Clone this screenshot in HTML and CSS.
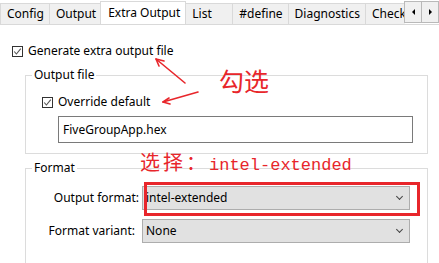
FILE: index.html
```html
<!DOCTYPE html>
<html>
<head>
    <title>Extra Output</title>
    <link rel="stylesheet" href="styles.css">
</head>
<body>
<!-- Tab strip -->
<div class="tabs">
    <div class="tab-list">
        <div class="tab">Config</div>
        <div class="tab">Output</div>
        <div class="tab active">Extra Output</div>
        <div class="tab">List</div>
        <div class="tab">#define</div>
        <div class="tab">Diagnostics</div>
        <div class="tab">Check</div>
    </div>
    <div class="tab-scroll">
        <div class="scroll-btn"><span class="tri-left"></span></div>
        <div class="scroll-btn"><span class="tri-right"></span></div>
    </div>
</div>

<div class="page">
    <label class="check-row">
        <span class="check-box">
            <svg width="9" height="9" viewBox="0 0 9 9"><path d="M1.2 4.5 L3.4 7 L7.8 1.6" fill="none" stroke="#555" stroke-width="1.1"/></svg>
        </span>
        Generate extra output file
    </label>

    <fieldset class="group">
        <legend>Output file</legend>
        <label class="check-row inner">
            <span class="check-box">
                <svg width="9" height="9" viewBox="0 0 9 9"><path d="M1.2 4.5 L3.4 7 L7.8 1.6" fill="none" stroke="#555" stroke-width="1.1"/></svg>
            </span>
            Override default
        </label>
        <div class="text-box">FiveGroupApp.hex</div>
    </fieldset>

    <fieldset class="group format">
        <legend>Format</legend>
        <div class="form-grid">
            <div class="form-label">Output format:</div>
            <div class="select">intel-extended <span class="chevron"></span></div>
            <div class="form-label narrow">Format variant:</div>
            <div class="select">None <span class="chevron"></span></div>
        </div>
    </fieldset>
</div>

<!-- red annotations drawn over the dialog -->
<svg class="marks" width="439" height="263" viewBox="0 0 439 263">
    <g stroke="#e8262b" stroke-width="1.6" fill="none" stroke-linecap="round">
        <path d="M185 83 L156 59"/>
        <path d="M156 59 L164 61 M156 59 L159 66"/>
        <path d="M198 92 L163 102"/>
        <path d="M163 102 L169 98 M163 102 L170 104"/>
    </g>
    <rect x="145.5" y="183.5" width="273" height="31" fill="none" stroke="#e8262b" stroke-width="3"/>
</svg>
<div class="note note-check">勾选</div>
<div class="note note-format"><span class="cjk">选择：</span>intel-extended</div>
</body>
</html>
```

FILE: styles.css
```css
body {
    margin: 0;
    width: 439px;
    height: 263px;
    overflow: hidden;
    background: #fff;
    font-family: "Noto Sans", "Open Sans", sans-serif;
    font-size: 12px;
    color: #000;
    position: relative;
}
.tabs {
    display: flex;
    height: 25px;
    border-bottom: 1px solid #d9d9d9;
    box-sizing: border-box;
}
.tab-list {
    display: flex;
    align-items: flex-end;
    flex: 1;
    overflow: hidden;
}
.tab {
    flex: none;
    box-sizing: border-box;
    min-width: 48px;
    height: 21px;
    line-height: 19px;
    padding: 0 5px 0 6px;
    background: #f0f0f0;
    border: 1px solid #d9d9d9;
    border-bottom: none;
    margin-right: -1px;
    white-space: nowrap;
}
.tab.active {
    height: 24px;
    line-height: 21px;
    padding: 0 5px 0 7px;
    background: #fff;
    margin: 0 -1px -1px -1px;
    position: relative;
}
.tab-scroll {
    display: flex;
    align-self: flex-start;
    margin-top: 1px;
}
.scroll-btn {
    width: 18px;
    height: 22px;
    box-sizing: border-box;
    background: #f0f0f0;
    border: 1px solid #b9b9b9;
    margin-left: -1px;
    display: flex;
    align-items: center;
    justify-content: center;
}
.tri-left {
    border-right: 3px solid #000;
    border-top: 3px solid transparent;
    border-bottom: 3px solid transparent;
}
.tri-right {
    border-left: 3px solid #000;
    border-top: 3px solid transparent;
    border-bottom: 3px solid transparent;
}
.page {
    padding: 19px 11px 0 12px;
}
.check-row {
    display: flex;
    align-items: center;
    gap: 5px;
    line-height: 14px;
    height: 14px;
}
.check-box {
    width: 9px;
    height: 9px;
    border: 1px solid #333;
    display: flex;
}
.group {
    margin: 10px 0 0 13px;
    padding: 0 0 10px 6px;
    border: 1px solid #dcdcdc;
}
.group legend {
    padding: 0 2px;
    line-height: 14px;
}
.check-row.inner {
    margin: 13px 0 0 10px;
}
.text-box {
    margin: 7px 0 0 26px;
    width: 355px;
    height: 27px;
    box-sizing: border-box;
    border: 1px solid #7a7a7a;
    padding-left: 4px;
    line-height: 25px;
}
.group.format {
    margin-top: 7px;
    padding-bottom: 20px;
}
.form-grid {
    display: grid;
    grid-template-columns: 107px 268px;
    column-gap: 3px;
    row-gap: 9px;
    margin-top: 11px;
}
.form-label {
    text-align: right;
    line-height: 24px;
}
.form-label.narrow {
    padding-right: 4px;
}
.select {
    position: relative;
    height: 24px;
    box-sizing: border-box;
    background: #e1e1e1;
    border: 1px solid #adadad;
    padding-left: 3px;
    line-height: 22px;
}
.chevron {
    position: absolute;
    right: 7px;
    top: 7px;
    width: 4px;
    height: 4px;
    border-right: 1px solid #444;
    border-bottom: 1px solid #444;
    transform: rotate(45deg);
}
.marks {
    position: absolute;
    left: 0;
    top: 0;
}
.note {
    position: absolute;
    color: #e8262b;
    white-space: nowrap;
}
.note-check {
    left: 219px;
    top: 63px;
    font-family: "Noto Sans CJK SC", sans-serif;
    font-size: 25px;
    line-height: 34px;
}
.note-format {
    left: 140px;
    top: 150px;
    font-family: "Liberation Mono", monospace;
    font-size: 17px;
    line-height: 24px;
}
.note-format .cjk {
    font-family: "Noto Sans CJK SC", sans-serif;
    font-size: 20px;
    letter-spacing: 3px;
}
```
